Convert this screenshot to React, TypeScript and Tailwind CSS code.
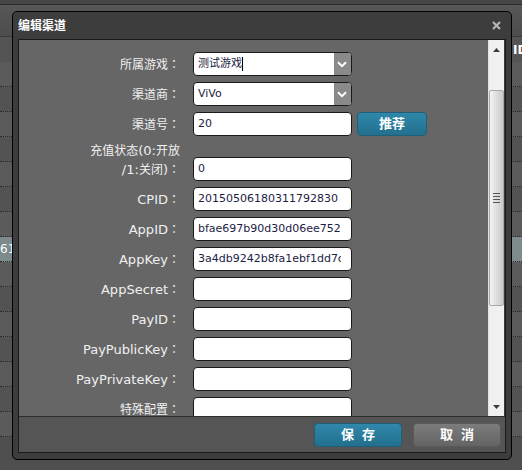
import React from 'react';

type Row = {
    label: string;
    value?: string;
    kind?: 'select' | 'input';
    caret?: boolean;
    button?: string;
    tall?: boolean;
};

const rows: Row[] = [
    { label: '所属游戏：', value: '测试游戏', kind: 'select', caret: true },
    { label: '渠道商：', value: 'ViVo', kind: 'select' },
    { label: '渠道号：', value: '20', button: '推荐' },
    { label: '充值状态(0:开放\n/1:关闭)：', value: '0', tall: true },
    { label: 'CPID：', value: '20150506180311792830' },
    { label: 'AppID：', value: 'bfae697b90d30d06ee752' },
    { label: 'AppKey：', value: '3a4db9242b8fa1ebf1dd7c05e2a1b3f7' },
    { label: 'AppSecret：' },
    { label: 'PayID：' },
    { label: 'PayPublicKey：' },
    { label: 'PayPrivateKey：' },
    { label: '特殊配置：' },
];

// underlying table rows behind the dialog
const bgRows = Array.from({ length: 15 }, (_, i) => i);

// CJK glyphs sit at 12px, latin at 13px, colon centred like YaHei
function Label({ text }: { text: string }) {
    const lines = text.split('\n');
    return (
        <>
            {lines.map((line, li) => (
                <div key={li}>
                    {Array.from(line).map((ch, i) =>
                        ch === '：' ? (
                            <span key={i} className="text-[12px] font-['Noto_Sans_CJK_TC',sans-serif]">：</span>
                        ) : /[\u4e00-\u9fff]/.test(ch) ? (
                            <span key={i} className="text-[12px]">{ch}</span>
                        ) : (
                            <span key={i}>{ch}</span>
                        )
                    )}
                </div>
            ))}
        </>
    );
}

function Chevron() {
    return (
        <svg width="10" height="7" viewBox="0 0 10 7" fill="none">
            <path d="M1 1.2 L5 5.2 L9 1.2" stroke="white" strokeWidth="2" />
        </svg>
    );
}

function Field({ row }: { row: Row }) {
    return (
        <div className="w-[159px] h-[24px] rounded-[4px] border border-[#1a1a1a] bg-white flex items-center overflow-hidden shrink-0">
            <div className="ml-[4px] w-[143px] overflow-hidden flex items-center whitespace-nowrap text-[11px] text-[#1c1c44]">
                {row.value}
                {row.caret && <span className="inline-block w-px h-[14px] bg-black" />}
            </div>
            {row.kind === 'select' && (
                <div className="ml-auto w-[18px] h-full bg-[#8a8a8a] flex items-center justify-center">
                    <Chevron />
                </div>
            )}
        </div>
    );
}

export default function App() {
    return (
        <div className="relative w-[522px] h-[470px] overflow-hidden bg-[#4f4f4f] font-['DejaVu_Sans','Noto_Sans_CJK_SC',sans-serif]">

            {/* Page behind the dialog */}
            <div className="h-[4px] bg-[#464646]" />
            <div className="h-px bg-[#2a2a2a]" />
            <div className="h-[31px] bg-gradient-to-b from-[#575757] to-[#4d4d4d]" />
            <div className="h-px bg-[#3a3a3a]" />
            <div className="h-[25px] grid grid-cols-[513px_1fr] items-center bg-[#545454] text-[12px] font-bold text-white">
                <div />
                <div>ID</div>
            </div>
            {bgRows.map((i) => (
                <div
                    key={i}
                    className={
                        'h-[25px] grid grid-cols-[15px_1fr] items-center border-b border-dotted border-[#2a2a2a] text-[12px] text-white ' +
                        (i === 7 ? 'bg-[#7e8b8c]' : i % 2 === 0 ? 'bg-[#5b5b5b]' : 'bg-[#535353]')
                    }
                >
                    <div className="text-right">{i === 7 ? '61' : ''}</div>
                    <div />
                </div>
            ))}

            {/* Dialog */}
            <div className="absolute left-[12px] top-[11px] w-[500px] h-[449px] rounded-[5px] border border-black bg-[#3d3d3d] flex flex-col px-[5px] pb-[6px]">
                <div className="h-[27px] flex items-center justify-between">
                    <span className="text-[12px] font-bold text-white">编辑渠道</span>
                    <svg width="9" height="9" viewBox="0 0 9 9" className="mr-[5px]">
                        <path d="M1 1 L8 8 M8 1 L1 8" stroke="#b4b4b4" strokeWidth="2.2" />
                    </svg>
                </div>

                <div className="flex-1 border border-[#1a1a1a] flex flex-col">
                    <div className="flex h-[376px]">
                        {/* Form */}
                        <div className="w-[469px] h-full overflow-hidden bg-[#666] pt-[12px] flex flex-col gap-[6px]">
                            {rows.map((row, i) => (
                                <div key={i} className={'flex shrink-0 ' + (row.tall ? 'h-[39px] items-start' : 'h-[24px] items-center')}>
                                    <div
                                        className={
                                            'w-[161px] text-right text-[13px] text-[#f0f0f0] whitespace-nowrap ' +
                                            (row.tall ? 'leading-[17px]' : 'leading-[24px]')
                                        }
                                    >
                                        <Label text={row.label} />
                                    </div>
                                    <div className={'ml-[13px] flex items-center ' + (row.tall ? 'mt-[15px]' : '')}>
                                        <Field row={row} />
                                        {row.button && (
                                            <div className="ml-[5px] w-[70px] h-[24px] rounded-[4px] border border-[#1f5f79] bg-gradient-to-b from-[#2f88aa] to-[#236f8e] flex items-center justify-center text-[13px] font-bold text-white">
                                                {row.button}
                                            </div>
                                        )}
                                    </div>
                                </div>
                            ))}
                        </div>

                        {/* Scrollbar */}
                        <div className="w-[16px] h-full bg-[#f0f0f0] border-l border-[#e2e2e2] flex flex-col items-center">
                            <div className="h-[17px] flex items-center justify-center pt-[2px]">
                                <svg width="7" height="4" viewBox="0 0 7 4"><path d="M0 4 L3.5 0 L7 4 Z" fill="#3c3c3c" /></svg>
                            </div>
                            <div className="mt-[33px] w-[15px] h-[216px] rounded-[2px] border border-[#a9a9a9] bg-gradient-to-r from-[#f4f4f4] via-[#dedede] to-[#c9c9c9] flex flex-col items-center justify-center gap-[2px]">
                                <div className="w-[7px] h-px bg-[#555]" />
                                <div className="w-[7px] h-px bg-[#555]" />
                                <div className="w-[7px] h-px bg-[#555]" />
                                <div className="w-[7px] h-px bg-[#555]" />
                            </div>
                            <div className="mt-auto h-[17px] flex items-center justify-center pb-[2px]">
                                <svg width="7" height="4" viewBox="0 0 7 4"><path d="M0 0 L3.5 4 L7 0 Z" fill="#3c3c3c" /></svg>
                            </div>
                        </div>
                    </div>

                    {/* Footer */}
                    <div className="flex-1 border-t border-[#2e2e2e] bg-[#555] flex justify-end items-start gap-[11px] pt-[6px] pr-[4px]">
                        <div className="w-[88px] h-[24px] rounded-[4px] border border-[#1f5f79] bg-gradient-to-b from-[#2f88aa] to-[#236f8e] flex items-center justify-center text-[13px] font-bold text-white tracking-[8px] pl-[8px]">
                            保存
                        </div>
                        <div className="w-[88px] h-[24px] rounded-[4px] border border-[#5a5a5a] bg-gradient-to-b from-[#7c7c7c] to-[#646464] flex items-center justify-center text-[13px] font-bold text-white tracking-[8px] pl-[8px]">
                            取消
                        </div>
                    </div>
                </div>
            </div>
        </div>
    );
}
